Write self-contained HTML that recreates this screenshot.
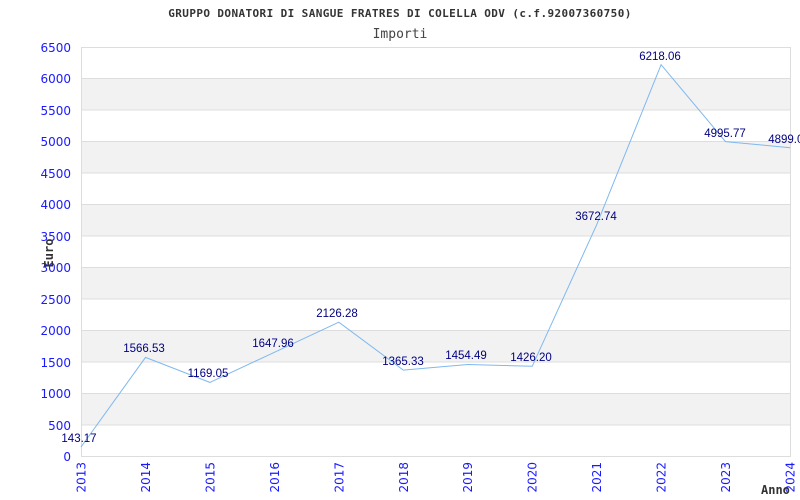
<!DOCTYPE html>
<html><head><meta charset="utf-8"><style>
html,body{margin:0;padding:0;background:#fff;width:800px;height:500px;overflow:hidden}
</style></head><body>
<svg width="800" height="500" xmlns="http://www.w3.org/2000/svg" style="display:block">
<rect width="800" height="500" fill="#fff"/>
<text x="400" y="17" text-anchor="middle" font-family="DejaVu Sans Mono, monospace" font-weight="bold" font-size="11" letter-spacing="0.4" fill="#333">GRUPPO DONATORI DI SANGUE FRATRES DI COLELLA ODV (c.f.92007360750)</text>
<text x="400" y="38" text-anchor="middle" font-family="DejaVu Sans Mono, monospace" font-size="13" fill="#444">Importi</text>
<g fill="#f2f2f2">
<rect x="81" y="78.5" width="709" height="31.5"/>
<rect x="81" y="141.5" width="709" height="31.5"/>
<rect x="81" y="204.5" width="709" height="31.5"/>
<rect x="81" y="267.5" width="709" height="31.5"/>
<rect x="81" y="330.5" width="709" height="31.5"/>
<rect x="81" y="393.5" width="709" height="31.5"/>
</g>
<g stroke="#ddd" stroke-width="1">
<line x1="81" y1="47.5" x2="790" y2="47.5"/>
<line x1="81" y1="78.5" x2="790" y2="78.5"/>
<line x1="81" y1="110" x2="790" y2="110"/>
<line x1="81" y1="141.5" x2="790" y2="141.5"/>
<line x1="81" y1="173" x2="790" y2="173"/>
<line x1="81" y1="204.5" x2="790" y2="204.5"/>
<line x1="81" y1="236" x2="790" y2="236"/>
<line x1="81" y1="267.5" x2="790" y2="267.5"/>
<line x1="81" y1="299" x2="790" y2="299"/>
<line x1="81" y1="330.5" x2="790" y2="330.5"/>
<line x1="81" y1="362" x2="790" y2="362"/>
<line x1="81" y1="393.5" x2="790" y2="393.5"/>
<line x1="81" y1="425" x2="790" y2="425"/>
<line x1="81" y1="456.5" x2="790" y2="456.5"/>
<line x1="81.5" y1="47" x2="81.5" y2="457"/>
<line x1="790.5" y1="47" x2="790.5" y2="457"/>
</g>
<g font-family="DejaVu Sans, sans-serif" font-size="12" fill="#1a1aff" text-anchor="end">
<text x="71" y="52">6500</text><text x="71" y="83">6000</text><text x="71" y="115">5500</text>
<text x="71" y="146">5000</text><text x="71" y="178">4500</text><text x="71" y="209">4000</text>
<text x="71" y="241">3500</text><text x="71" y="272">3000</text><text x="71" y="304">2500</text>
<text x="71" y="335">2000</text><text x="71" y="367">1500</text><text x="71" y="398">1000</text>
<text x="71" y="430">500</text><text x="71" y="461">0</text>
</g>
<g font-family="DejaVu Sans, sans-serif" font-size="12" fill="#1a1aff" text-anchor="end">
<text transform="translate(85.5,462) rotate(-90)">2013</text>
<text transform="translate(150,462) rotate(-90)">2014</text>
<text transform="translate(214.4,462) rotate(-90)">2015</text>
<text transform="translate(278.9,462) rotate(-90)">2016</text>
<text transform="translate(343.3,462) rotate(-90)">2017</text>
<text transform="translate(407.8,462) rotate(-90)">2018</text>
<text transform="translate(472.2,462) rotate(-90)">2019</text>
<text transform="translate(536.7,462) rotate(-90)">2020</text>
<text transform="translate(601.1,462) rotate(-90)">2021</text>
<text transform="translate(665.6,462) rotate(-90)">2022</text>
<text transform="translate(730,462) rotate(-90)">2023</text>
<text transform="translate(794.5,462) rotate(-90)">2024</text>
</g>
<text transform="translate(53,253) rotate(-90)" text-anchor="middle" font-family="DejaVu Sans Mono, monospace" font-weight="bold" font-size="12" fill="#333">Euro</text>
<text x="761" y="494" font-family="DejaVu Sans Mono, monospace" font-weight="bold" font-size="12" fill="#333">Anno</text>
<polyline fill="none" stroke="#7fb8f0" stroke-width="1" points="81,447 145.5,357.4 209.9,382.4 274.4,352.3 338.8,322.2 403.3,370.1 467.7,364.5 532.2,366.3 596.6,224.9 661.1,64.7 725.5,141.6 790,147.7"/>
<g font-family="Liberation Sans, sans-serif" font-size="11.5" fill="#000080" text-anchor="middle">
<text x="79" y="442">143.17</text>
<text x="144" y="352">1566.53</text>
<text x="208" y="377">1169.05</text>
<text x="273" y="347">1647.96</text>
<text x="337" y="317">2126.28</text>
<text x="403" y="365">1365.33</text>
<text x="466" y="359">1454.49</text>
<text x="531" y="361">1426.20</text>
<text x="596" y="220">3672.74</text>
<text x="660" y="60">6218.06</text>
<text x="725" y="137">4995.77</text>
<text x="789" y="143">4899.00</text>
</g>
</svg>
</body></html>
